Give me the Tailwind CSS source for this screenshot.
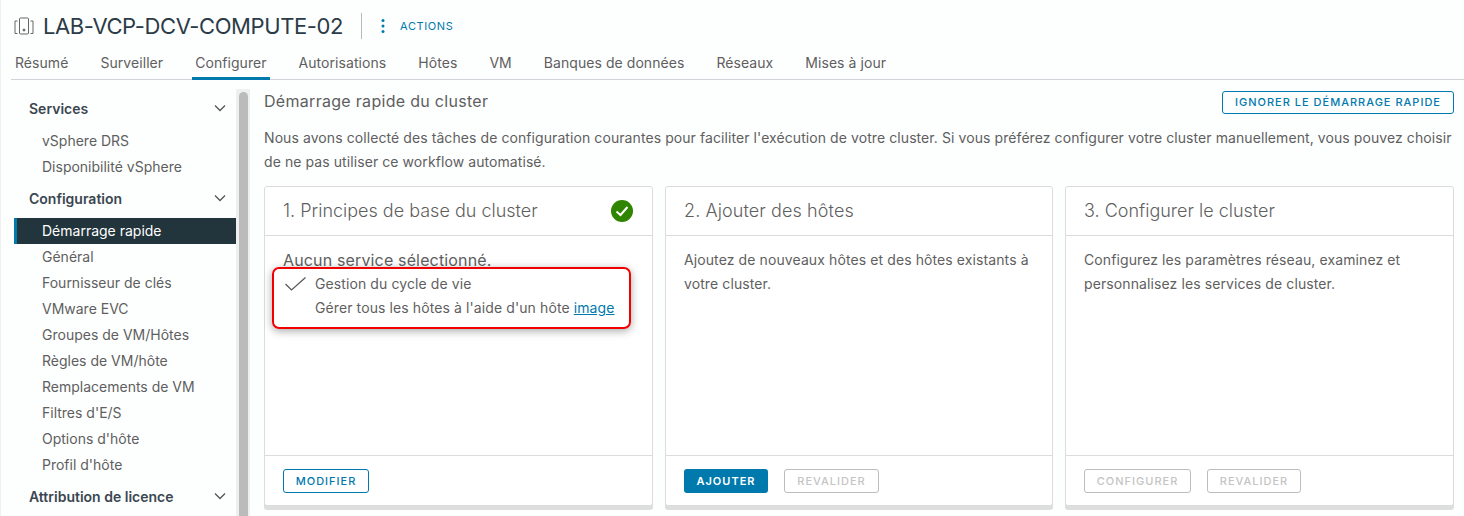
<!DOCTYPE html>
<html lang="fr">
<head>
    <meta charset="UTF-8">
    <title>LAB-VCP-DCV-COMPUTE-02 - Configurer</title>
    <script src="https://cdn.jsdelivr.net/npm/@tailwindcss/browser@4"></script>
</head>
<body class="relative h-[516px] w-[1464px] overflow-hidden border-l border-[#f0f0f0] bg-[#fdfefe] font-['Inter',sans-serif] text-[#5f5f5f]">
    <div class="absolute left-[-1px] top-[328px] h-[24px] w-px bg-[#9a9a9a]"></div>
    <!-- Header -->
    <header class="pl-[13px] pt-[13px]">
        <div class="flex h-[26px] items-center">
            <svg class="mr-[9px] h-[18px] w-[20px] text-[#666]" viewBox="0 0 20 18" fill="none" stroke="currentColor" stroke-width="1">
                <path d="M3.500 4H1v12.500h2.500M16.500 4H19v12.500h-2.500"/>
                <rect x="5.500" y="1" width="9" height="16" rx="1"/>
                <circle cx="10" cy="13" r="1" fill="currentColor"/>
            </svg>
            <h1 class="text-[22px] leading-[26px] tracking-[-0.4px] text-[#2b3b47]">LAB-VCP-DCV-COMPUTE-02</h1>
            <div class="ml-[18px] h-[26px] w-px bg-[#b9b9b9]"></div>
            <svg class="ml-[19px] h-[16px] w-[4px] text-[#0079ad]" viewBox="0 0 4 16" fill="currentColor">
                <circle cx="2" cy="2.500" r="1.500"/><circle cx="2" cy="8" r="1.500"/><circle cx="2" cy="13.500" r="1.500"/>
            </svg>
            <span class="ml-[15px] text-[11px] tracking-[0.6px] text-[#0079ad]">ACTIONS</span>
        </div>
        <nav class="ml-[-3px] mt-[11px] flex h-[30px] gap-[26px] border-b border-[#cfd4d8] pl-[1px] text-[14px] tracking-[0.06px]">
            <a class="px-[3px] pt-[2px]">Résumé</a>
            <a class="px-[3px] pt-[2px]">Surveiller</a>
            <a class="h-[30px] border-b-[3px] border-[#0079ad] px-[3px] pt-[2px]">Configurer</a>
            <a class="px-[3px] pt-[2px]">Autorisations</a>
            <a class="px-[3px] pt-[2px]">Hôtes</a>
            <a class="px-[3px] pt-[2px]">VM</a>
            <a class="px-[3px] pt-[2px]">Banques de données</a>
            <a class="px-[3px] pt-[2px]">Réseaux</a>
            <a class="px-[3px] pt-[2px]">Mises à jour</a>
        </nav>
    </header>

    <div class="flex">
        <!-- Sidebar -->
        <aside class="ml-[13px] mt-[15px] h-[440px] w-[222px] text-[14px]">
            <div class="flex h-[26px] items-center justify-between pl-[15px] pr-[10px] font-semibold text-[#3a4750]">
                Services
                <svg class="h-[8px] w-[12px] text-[#555]" viewBox="0 0 12 8" fill="none" stroke="currentColor" stroke-width="1.300"><path d="M1 1.500l5 5 5-5"/></svg>
            </div>
            <div class="mt-[6px]">
                <div class="flex h-[26px] items-center pl-[28px]">vSphere DRS</div>
                <div class="flex h-[26px] items-center pl-[28px]">Disponibilité vSphere</div>
            </div>
            <div class="mt-[6px] flex h-[26px] items-center justify-between pl-[15px] pr-[10px] font-semibold text-[#3a4750]">
                Configuration
                <svg class="h-[8px] w-[12px] text-[#555]" viewBox="0 0 12 8" fill="none" stroke="currentColor" stroke-width="1.300"><path d="M1 1.500l5 5 5-5"/></svg>
            </div>
            <div class="mt-[7px]">
                <div class="flex h-[26px] items-center border-l-[3px] border-[#0079ad] bg-[#22343c] pb-[2px] pl-[25px] text-white">Démarrage rapide</div>
                <div class="flex h-[26px] items-center pb-[2px] pl-[28px]">Général</div>
                <div class="flex h-[26px] items-center pb-[2px] pl-[28px]">Fournisseur de clés</div>
                <div class="flex h-[26px] items-center pb-[2px] pl-[28px]">VMware EVC</div>
                <div class="flex h-[26px] items-center pb-[2px] pl-[28px]">Groupes de VM/Hôtes</div>
                <div class="flex h-[26px] items-center pb-[2px] pl-[28px]">Règles de VM/hôte</div>
                <div class="flex h-[26px] items-center pb-[2px] pl-[28px]">Remplacements de VM</div>
                <div class="flex h-[26px] items-center pb-[2px] pl-[28px]">Filtres d'E/S</div>
                <div class="flex h-[26px] items-center pb-[2px] pl-[28px]">Options d'hôte</div>
                <div class="flex h-[26px] items-center pb-[2px] pl-[28px]">Profil d'hôte</div>
            </div>
            <div class="mt-[5px] flex h-[26px] items-center justify-between pl-[15px] pr-[10px] font-semibold text-[#3a4750]">
                Attribution de licence
                <svg class="h-[8px] w-[12px] text-[#555]" viewBox="0 0 12 8" fill="none" stroke="currentColor" stroke-width="1.300"><path d="M1 1.500l5 5 5-5"/></svg>
            </div>
        </aside>

        <!-- Scrollbar -->
        <div class="mt-[9px] h-[430px] w-[14px] bg-[#efefef] px-[3px] pt-[3px]">
            <div class="h-full w-[9px] rounded-t-[5px] bg-[#bbbbbb]"></div>
        </div>

        <!-- Main -->
        <main class="ml-[14px] w-[1190px] pt-[11px]">
            <div class="flex h-[22px] items-center justify-between">
                <h2 class="pb-[2px] text-[16px] tracking-[0.3px]">Démarrage rapide du cluster</h2>
                <button class="h-[23px] w-[232px] rounded-[3px] border border-[#0079ad] text-[11px] font-medium tracking-[1px] text-[#0079ad]">IGNORER LE DÉMARRAGE RAPIDE</button>
            </div>
            <p class="mt-[13px] text-[14px] leading-[24px] tracking-[0.08px]">Nous avons collecté des tâches de configuration courantes pour faciliter l'exécution de votre cluster. Si vous préférez configurer votre cluster manuellement, vous pouvez choisir de ne pas utiliser ce workflow automatisé.</p>

            <div class="mt-[12px] grid grid-cols-[389px_388px_389px] gap-x-[12px]">
                <!-- Card 1 -->
                <section class="relative flex h-[320px] flex-col rounded-[3px] border border-[#dcdcdc] bg-white shadow-[0_4px_0_#dedede]">
                    <div class="flex h-[49px] items-center justify-between border-b border-[#dcdcdc] pl-[18px] pr-[19px]">
                        <h3 class="pb-[1px] text-[18px] font-light">1. Principes de base du cluster</h3>
                        <svg class="h-[22px] w-[22px]" viewBox="0 0 22 22"><circle cx="11" cy="11" r="11" fill="#2f8400"/><path d="M5.500 11.500l4 3.500 7-8" fill="none" stroke="#fff" stroke-width="2"/></svg>
                    </div>
                    <div class="flex-1 px-[18px] pt-[13px]">
                        <p class="text-[16px] leading-[22px] tracking-[0.15px]">Aucun service sélectionné.</p>
                        <div class="mt-[1px] flex text-[14px] leading-[24px] tracking-[0.1px]">
                            <svg class="ml-[2px] mt-[5px] h-[14px] w-[21px] text-[#555]" viewBox="0 0 21 14" fill="none" stroke="currentColor" stroke-width="1.200"><path d="M0.500 7l6 6L20.500 0.500"/></svg>
                            <div class="ml-[9px]">
                                <div>Gestion du cycle de vie</div>
                                <div>Gérer tous les hôtes à l'aide d'un hôte <a class="text-[#0079ad] underline">image</a></div>
                            </div>
                        </div>
                    </div>
                    <div class="flex h-[50px] items-center gap-[16px] border-t border-[#dcdcdc] px-[18px] pt-[1px]">
                        <button class="h-[24px] w-[86px] rounded-[3px] border border-[#0079ad] text-[11px] font-medium tracking-[1px] text-[#0079ad]">MODIFIER</button>
                    </div>
                    <!-- Red annotation -->
                    <div class="absolute left-[7px] top-[80px] h-[62px] w-[359px] rounded-[7px] border-2 border-[#f00000] shadow-[0_2px_8px_rgba(0,0,0,0.35)]"></div>
                </section>

                <!-- Card 2 -->
                <section class="flex h-[320px] flex-col rounded-[3px] border border-[#dcdcdc] bg-white shadow-[0_4px_0_#dedede]">
                    <div class="flex h-[49px] items-center border-b border-[#dcdcdc] pl-[18px]">
                        <h3 class="pb-[1px] text-[18px] font-light tracking-[0.1px]">2. Ajouter des hôtes</h3>
                    </div>
                    <div class="flex-1 px-[18px] pt-[12px] text-[14px] leading-[24px] tracking-[0.1px]">Ajoutez de nouveaux hôtes et des hôtes existants à votre cluster.</div>
                    <div class="flex h-[50px] items-center gap-[16px] border-t border-[#dcdcdc] px-[18px] pt-[1px]">
                        <button class="h-[24px] w-[84px] rounded-[3px] bg-[#0079ad] text-[11px] font-semibold tracking-[1px] text-white">AJOUTER</button>
                        <button class="h-[24px] w-[95px] rounded-[3px] border border-[#bdbdbd] text-[11px] font-medium tracking-[1px] text-[#c4c4c4]">REVALIDER</button>
                    </div>
                </section>

                <!-- Card 3 -->
                <section class="flex h-[320px] flex-col rounded-[3px] border border-[#dcdcdc] bg-white shadow-[0_4px_0_#dedede]">
                    <div class="flex h-[49px] items-center border-b border-[#dcdcdc] pl-[18px]">
                        <h3 class="pb-[1px] text-[18px] font-light">3. Configurer le cluster</h3>
                    </div>
                    <div class="flex-1 px-[18px] pt-[12px] text-[14px] leading-[24px] tracking-[0.1px]">Configurez les paramètres réseau, examinez et personnalisez les services de cluster.</div>
                    <div class="flex h-[50px] items-center gap-[16px] border-t border-[#dcdcdc] px-[18px] pt-[1px]">
                        <button class="h-[24px] w-[107px] rounded-[3px] border border-[#bdbdbd] text-[11px] font-medium tracking-[1px] text-[#c4c4c4]">CONFIGURER</button>
                        <button class="h-[24px] w-[94px] rounded-[3px] border border-[#bdbdbd] text-[11px] font-medium tracking-[1px] text-[#c4c4c4]">REVALIDER</button>
                    </div>
                </section>
            </div>
        </main>
    </div>
</body>
</html>
